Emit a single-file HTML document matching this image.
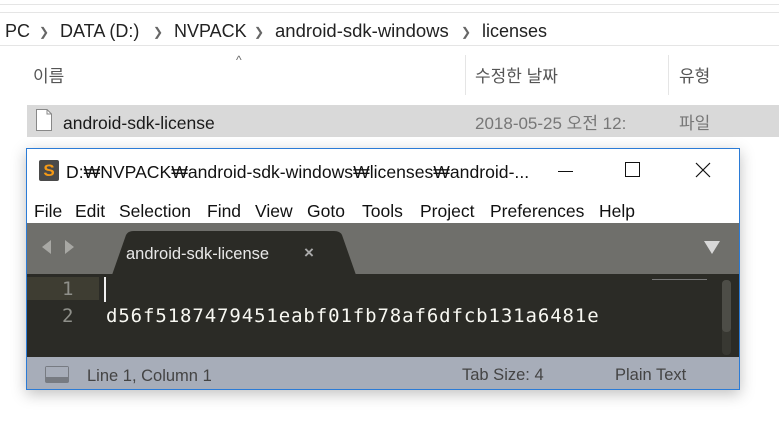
<!DOCTYPE html>
<html><head><meta charset="utf-8"><style>
*{margin:0;padding:0;box-sizing:border-box}
body{width:779px;height:446px;background:#fff;position:relative;overflow:hidden;font-family:"Liberation Sans","Noto Sans CJK KR",sans-serif;color:#1a1a1a}
.a{position:absolute}
.t{white-space:nowrap;line-height:20px}
.c{color:#666;font-size:12px}
</style></head><body>
<div class="a" style="left:0;top:4px;width:779px;height:1px;background:#e5e5e5"></div>
<div class="a" style="left:0;top:12px;width:779px;height:1px;background:#e5e5e5"></div>
<div class="a" style="left:0;top:45px;width:779px;height:1px;background:#e5e5e5"></div>
<div class="a t" style="left:5px;top:21px;font-size:18px;color:#222">PC</div>
<div class="a t c" style="left:39px;top:22px">&#10095;</div>
<div class="a t" style="left:60px;top:21px;font-size:18px;color:#222">DATA (D:)</div>
<div class="a t c" style="left:153px;top:22px">&#10095;</div>
<div class="a t" style="left:174px;top:21px;font-size:18px;color:#222">NVPACK</div>
<div class="a t c" style="left:254px;top:22px">&#10095;</div>
<div class="a t" style="left:275px;top:21px;font-size:18.5px;color:#222">android-sdk-windows</div>
<div class="a t c" style="left:461px;top:22px">&#10095;</div>
<div class="a t" style="left:482px;top:21px;font-size:18px;color:#222">licenses</div>
<div class="a t" style="left:236px;top:50px;font-size:12px;color:#666">^</div>
<div class="a t" style="left:33px;top:67px;font-size:17px;color:#555">이름</div>
<div class="a" style="left:465px;top:55px;width:1px;height:40px;background:#e5e5e5"></div>
<div class="a t" style="left:475px;top:67px;font-size:17px;color:#555">수정한 날짜</div>
<div class="a" style="left:668px;top:55px;width:1px;height:40px;background:#e5e5e5"></div>
<div class="a t" style="left:679px;top:67px;font-size:17px;color:#555">유형</div>
<div class="a" style="left:27px;top:105px;width:752px;height:32px;background:#d9d9d9"></div>
<svg class="a" style="left:36px;top:109px" width="16" height="22"><path d="M0.5 0.5H11L15.5 5V21.5H0.5Z" fill="#fff" stroke="#888"/><path d="M11 0.5V5H15.5" fill="none" stroke="#888"/></svg>
<div class="a t" style="left:63px;top:113px;font-size:17.5px">android-sdk-license</div>
<div class="a t" style="left:475px;top:114px;font-size:17px;color:#777">2018-05-25 오전 12:</div>
<div class="a t" style="left:679px;top:114px;font-size:17px;color:#777">파일</div>

<div class="a" style="left:26px;top:148px;width:714px;height:242px;border:1px solid #2b7bd6;background:#fff;box-shadow:0 4px 14px rgba(0,0,0,.25)">
 <div class="a" style="left:12px;top:11px;width:20px;height:21px;background:#4a4a4a;border-radius:2px;color:#f59a16;font-weight:bold;font-size:17px;text-align:center;line-height:21px">S</div>
 <div class="a t" style="left:39px;top:13px;font-size:17.6px;color:#111">D:₩NVPACK₩android-sdk-windows₩licenses₩android-...</div>
 <div class="a" style="left:531px;top:22px;width:15px;height:1px;background:#111"></div>
 <div class="a" style="left:598px;top:13px;width:15px;height:15px;border:1px solid #111"></div>
 <svg class="a" style="left:668px;top:13px" width="16" height="16"><path d="M1 1L15 15M15 1L1 15" stroke="#111" stroke-width="1.2"/></svg>
 <div class="a t" style="left:7px;top:52px;font-size:17.5px;color:#111">File</div>
 <div class="a t" style="left:48px;top:52px;font-size:17.5px;color:#111">Edit</div>
 <div class="a t" style="left:92px;top:52px;font-size:17.5px;color:#111">Selection</div>
 <div class="a t" style="left:180px;top:52px;font-size:17.5px;color:#111">Find</div>
 <div class="a t" style="left:228px;top:52px;font-size:17.5px;color:#111">View</div>
 <div class="a t" style="left:280px;top:52px;font-size:17.5px;color:#111">Goto</div>
 <div class="a t" style="left:335px;top:52px;font-size:17.5px;color:#111">Tools</div>
 <div class="a t" style="left:393px;top:52px;font-size:17.5px;color:#111">Project</div>
 <div class="a t" style="left:463px;top:52px;font-size:17.5px;color:#111">Preferences</div>
 <div class="a t" style="left:572px;top:52px;font-size:17.5px;color:#111">Help</div>
 <div class="a" style="left:0;top:74px;width:712px;height:51px;background:#6f6f6b"></div>
 <svg class="a" style="left:14px;top:90px" width="40" height="16"><path d="M10 1L1 8L10 15Z M24 1L33 8L24 15Z" fill="#a8a8a4"/></svg>
 <svg class="a" style="left:85px;top:82px" width="245" height="44"><path d="M0 44L14 4Q16 0 22 0H222Q228 0 230 4L244 44Z" fill="#2b2b26"/></svg>
 <div class="a t" style="left:99px;top:95px;font-size:16.5px;color:#e8e8e8">android-sdk-license</div>
 <div class="a t" style="left:277px;top:94px;font-size:17px;color:#aaa;font-weight:bold">×</div>
 <svg class="a" style="left:677px;top:92px" width="16" height="13"><path d="M0 0H16L8 13Z" fill="#d8d8d8"/></svg>
 <div class="a" style="left:0;top:125px;width:712px;height:83px;background:#2b2b26"></div>
 <div class="a" style="left:0;top:128px;width:72px;height:23px;background:#3e3d32"></div>
 <div class="a t" style="left:35px;top:130px;font-size:19px;color:#8f908a;font-family:'DejaVu Sans Mono',monospace">1</div>
 <div class="a t" style="left:35px;top:157px;font-size:19px;color:#8f908a;font-family:'DejaVu Sans Mono',monospace">2</div>
 <div class="a" style="left:77px;top:128px;width:2px;height:25px;background:#f0f0f0"></div>
 <div class="a t" style="left:79px;top:157px;font-size:19px;color:#f8f8f2;font-family:'DejaVu Sans Mono',monospace;letter-spacing:0.9px">d56f5187479451eabf01fb78af6dfcb131a6481e</div>
 <div class="a" style="left:625px;top:130px;width:55px;height:1px;background:#777"></div>
 <div class="a" style="left:695px;top:131px;width:9px;height:75px;background:#383832;border-radius:4px"></div>
 <div class="a" style="left:695px;top:131px;width:9px;height:52px;background:#4d4d47;border-radius:4px"></div>
 <div class="a" style="left:0;top:208px;width:712px;height:32px;background:#a7adb9"></div>
 <div class="a" style="left:18px;top:217px;width:24px;height:17px;border-radius:2px;background:#777b82"></div>
 <div class="a" style="left:19px;top:218px;width:22px;height:10px;background:#a7adb9"></div>
 <div class="a t" style="left:60px;top:217px;font-size:16.5px;color:#444">Line 1, Column 1</div>
 <div class="a t" style="left:435px;top:216px;font-size:16.5px;color:#444">Tab Size: 4</div>
 <div class="a t" style="left:588px;top:216px;font-size:16.5px;color:#444">Plain Text</div>
</div>
</body></html>
